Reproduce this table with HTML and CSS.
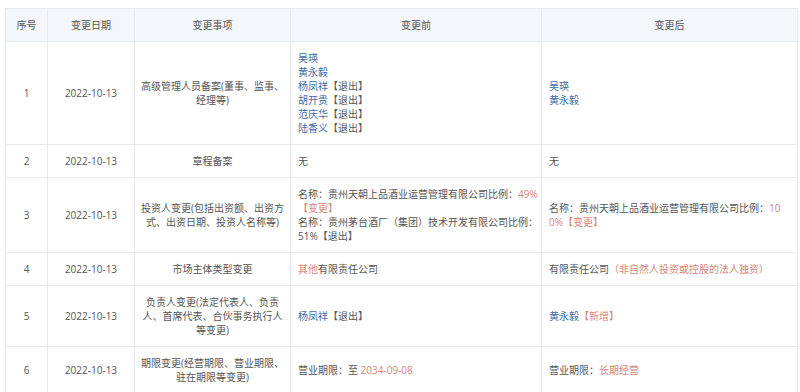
FILE: index.html
```html
<!DOCTYPE html>
<html lang="zh-CN">
<head>
<meta charset="utf-8">
<title>变更记录</title>
<link rel="stylesheet" href="styles.css">
</head>
<body>
<table class="changes">
  <colgroup>
    <col class="c-no">
    <col class="c-date">
    <col class="c-item">
    <col class="c-before">
    <col class="c-after">
  </colgroup>
  <thead>
    <tr>
      <th>序号</th>
      <th>变更日期</th>
      <th>变更事项</th>
      <th>变更前</th>
      <th>变更后</th>
    </tr>
  </thead>
  <tbody>
    <tr>
      <td class="center">1</td>
      <td class="center">2022-10-13</td>
      <td class="center item">高级管理人员备案(董事、监事、经理等)</td>
      <td class="val before">
        <span class="name">吴瑛</span><br>
        <span class="name">黄永毅</span><br>
        <span class="name">杨凤祥</span>【退出】<br>
        <span class="name">胡开贵</span>【退出】<br>
        <span class="name">范庆华</span>【退出】<br>
        <span class="name">陆香义</span>【退出】
      </td>
      <td class="val after">
        <span class="name">吴瑛</span><br>
        <span class="name">黄永毅</span>
      </td>
    </tr>
    <tr>
      <td class="center">2</td>
      <td class="center">2022-10-13</td>
      <td class="center item">章程备案</td>
      <td class="val before">无</td>
      <td class="val after">无</td>
    </tr>
    <tr>
      <td class="center">3</td>
      <td class="center">2022-10-13</td>
      <td class="center item">投资人变更(包括出资额、出资方式、出资日期、投资人名称等)</td>
      <td class="val before">
        <div>名称：贵州天朝上品酒业运营管理有限公司比例：<span class="hl">49%</span><span class="hl">【变更】</span></div>
        <div>名称：贵州茅台酒厂（集团）技术开发有限公司比例：51%【退出】</div>
      </td>
      <td class="val after breakall">名称：贵州天朝上品酒业运营管理有限公司比例：<span class="hl">10</span><span class="hl">0%</span><span class="hl">【变更】</span></td>
    </tr>
    <tr>
      <td class="center">4</td>
      <td class="center">2022-10-13</td>
      <td class="center item">市场主体类型变更</td>
      <td class="val before"><span class="hl">其他</span>有限责任公司</td>
      <td class="val after">有限责任公司<span class="hl">（非自然人投资或控股的法人独资）</span></td>
    </tr>
    <tr>
      <td class="center">5</td>
      <td class="center">2022-10-13</td>
      <td class="center item">负责人变更(法定代表人、负责人、首席代表、合伙事务执行人等变更)</td>
      <td class="val before"><span class="name">杨凤祥</span>【退出】</td>
      <td class="val after"><span class="name">黄永毅</span><span class="hl">【新增】</span></td>
    </tr>
    <tr>
      <td class="center">6</td>
      <td class="center">2022-10-13</td>
      <td class="center item">期限变更(经营期限、营业期限、驻在期限等变更)</td>
      <td class="val before">营业期限：至 <span class="hl">2034-09-08</span></td>
      <td class="val after">营业期限：<span class="hl">长期经营</span></td>
    </tr>
  </tbody>
</table>
</body>
</html>
```

FILE: styles.css
```css
html, body {
  margin: 0;
  padding: 0;
  background: #ffffff;
  overflow: hidden;
}

body {
  padding: 8px 3px 0 5px;
  font-family: "Open Sans", "Noto Sans CJK SC", sans-serif;
  font-size: 10px;
  line-height: 14px;
  color: #555555;
}

.changes {
  width: 792px;
  table-layout: fixed;
  border-collapse: collapse;
}

.c-no { width: 42px; }
.c-date { width: 87px; }
.c-item { width: 156px; }
.c-before { width: 251px; }
.c-after { width: 256px; }

.changes th,
.changes td {
  border: 1px solid #e6e9ee;
  padding: 9px 7px;
  vertical-align: middle;
  font-weight: normal;
}

.changes th {
  background: #f3f6fa;
  text-align: center;
  color: #555555;
}

.center {
  text-align: center;
}

.changes td.item {
  padding-left: 5px;
  padding-right: 5px;
}

.changes td.before {
  padding-right: 2px;
}

.val {
  text-align: left;
}

.breakall {
  word-break: break-all;
}

.name {
  color: #3f6ba6;
}

.hl {
  color: #d6857a;
}
```
